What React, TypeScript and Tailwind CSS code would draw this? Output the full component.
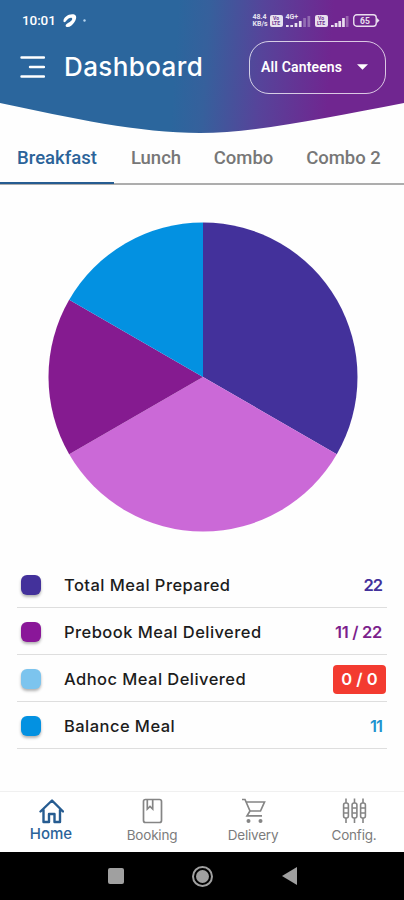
import { clsx } from 'clsx'

const tabs = [
  { label: 'Breakfast', width: 'w-[114px]' },
  { label: 'Lunch', width: 'w-[84px]' },
  { label: 'Combo', width: 'w-[91px]' },
  { label: 'Combo 2', width: 'w-[109px]' },
]

const slices = [
  { color: '#43319b', from: 0, to: 120 },
  { color: '#cb69d7', from: 120, to: 240 },
  { color: '#851b90', from: 240, to: 300 },
  { color: '#0391e1', from: 300, to: 360 },
]

const meals = [
  { label: 'Total Meal Prepared', value: '22', swatch: 'bg-[#43319b]', text: 'text-[#43319b] tracking-[-1px]' },
  { label: 'Prebook Meal Delivered', value: '11 / 22', swatch: 'bg-[#8a1799]', text: 'text-[#7d1f8c] tracking-[-0.3px]' },
  { label: 'Adhoc Meal Delivered', value: '0 / 0', swatch: 'bg-[#7cc4ee]', text: 'text-white', alert: true },
  { label: 'Balance Meal', value: '11', swatch: 'bg-[#0391e1]', text: 'text-[#1e93cf] tracking-[-1px]' },
]

const slicePath = (from: number, to: number) => {
  const point = (deg: number) => {
    const a = ((deg - 90) * Math.PI) / 180
    return `${155 + 154.5 * Math.cos(a)} ${155 + 154.5 * Math.sin(a)}`
  }
  return `M155 155L${point(from)}A154.5 154.5 0 0 1 ${point(to)}Z`
}

const SimBadge = ({ className }: { className?: string }) => (
  <div
    className={clsx(
      'flex h-[12px] w-[13px] flex-col items-center justify-center rounded-[2px] bg-white text-[5px] font-bold leading-[5px] text-[#6d3290]',
      className,
    )}
  >
    <span>Vo</span>
    <span>LTE</span>
  </div>
)

type SignalBarsProps = { bars: number[]; lit: number; step: number; className?: string }

const SignalBars = ({ bars, lit, step, className }: SignalBarsProps) => (
  <svg width={bars.length * step} height="12" className={className}>
    {bars.map((h, i) => (
      <rect key={i} x={i * step} y={12 - h} width="2.7" height={h} fill="#fff" opacity={i < lit ? 1 : 0.35} />
    ))}
  </svg>
)

const StatusBar = () => (
  <div className="flex h-[40px] items-center pl-[22px] pr-[24px] pt-[1px] font-[Roboto] text-white">
    <span className="w-[34px] whitespace-nowrap text-[13.5px] font-medium leading-none tracking-[-0.1px]">10:01</span>
    <svg width="24" height="16" viewBox="0 0 24 16" className="ml-[6px]">
      <path
        d="M1.500 8.500C1 4 7 .5 11.500 1.300C15.500 2.200 14.500 6.500 12 9.800C10.500 12 7.500 14.500 5 14C2.500 13.300 4 11 6 10C8.500 8.800 11 6.800 10 5.300C9 4 6 5.500 4.500 7.500C3.500 9 2 10 1.500 8.500Z"
        fill="#fff"
      />
      <circle cx="22.500" cy="7.500" r="1.200" fill="#b5d4ef" />
    </svg>
    <div className="ml-auto flex h-[14px] items-center opacity-85">
      <div className="w-[17px] text-[7px] font-bold leading-[7px]">
        <div>48.4</div>
        <div>KB/s</div>
      </div>
      <SimBadge />
      <div className="relative ml-[3px] h-[12px] w-[27px]">
        <SignalBars bars={[2, 2, 4, 6, 9, 11]} lit={4} step={4.3} />
        <span className="absolute -top-[1px] left-0 text-[7px] font-bold leading-[6px]">4G+</span>
      </div>
      <SimBadge className="ml-[2px]" />
      <SignalBars className="ml-[3px]" bars={[2, 4, 6, 9, 11]} lit={4} step={3.7} />
      <svg width="27" height="13" viewBox="0 0 27 13" className="ml-[4px]">
        <rect x=".75" y=".75" width="22.500" height="11.500" rx="3" fill="none" stroke="#fff" strokeWidth="1.400" />
        <path d="M24 4l2.500 2.500L24 9Z" fill="#fff" />
        <text x="12" y="9.500" textAnchor="middle" fontSize="8.500" fontWeight="700" fontFamily="Roboto, sans-serif" fill="#fff">
          65
        </text>
      </svg>
    </div>
  </div>
)

const Header = () => (
  <header className="relative h-[134px] shrink-0">
    <svg width="404" height="134" className="absolute inset-0">
      <defs>
        <linearGradient id="sky" gradientUnits="userSpaceOnUse" x1="175" y1="60" x2="330" y2="70">
          <stop offset="0" stopColor="#2b669d" />
          <stop offset=".2" stopColor="#36609c" />
          <stop offset=".55" stopColor="#56449a" />
          <stop offset="1" stopColor="#702690" />
        </linearGradient>
      </defs>
      <path d="M0 0H404V103C325 118 255 133 200 133C140 133 70 118 0 103Z" fill="url(#sky)" />
    </svg>
    <div className="relative">
      <StatusBar />
      <div className="flex h-[54px] items-center pl-[20px] pr-[18px] text-white">
        <svg width="25" height="24" stroke="#fff" strokeWidth="2.400" strokeLinecap="round">
          <path d="M1.500 2.500H24M10 12H24M1.500 21.500H24" />
        </svg>
        <h1 className="ml-[19px] whitespace-nowrap text-[26px] font-medium leading-none tracking-[0.4px]">Dashboard</h1>
        <button className="ml-auto flex h-[53px] w-[137px] items-center whitespace-nowrap rounded-[20px] border-[1.5px] border-white/75 pl-[11px] font-[Roboto] text-[14px] font-semibold tracking-[0.15px]">
          All Canteens
          <svg width="11" height="6" className="ml-[15px]">
            <path d="M0 .3H11L5.500 5.800Z" fill="#fff" />
          </svg>
        </button>
      </div>
    </div>
  </header>
)

const HomeIcon = () => (
  <svg width="26" height="26" viewBox="0 0 26 26" fill="none" stroke="#265c91" strokeWidth="2.400" strokeLinejoin="round" strokeLinecap="round">
    <path d="M2.500 13.500L14 2.500L25 13.500M5.500 11.500V24H11V16H16.500V24H22V11.500" />
  </svg>
)

const BookingIcon = () => (
  <svg width="26" height="26" viewBox="0 0 26 26" fill="none" stroke="#858585" strokeWidth="1.700">
    <rect x="4.500" y="1.500" width="18" height="23" rx="2" />
    <path d="M8.300 1.500V11L11 8.500L13.700 11V1.500" />
  </svg>
)

const DeliveryIcon = () => (
  <svg width="26" height="26" viewBox="0 0 26 26" fill="none" stroke="#858585" strokeWidth="1.700">
    <path d="M2 1.500H5L10 13H20.500L24.500 4H6.500M10 13L7 17.800H22" />
    <circle cx="8.500" cy="23" r="2" fill="#858585" stroke="none" />
    <circle cx="20.500" cy="23" r="2" fill="#858585" stroke="none" />
  </svg>
)

const ConfigIcon = () => (
  <svg width="26" height="26" viewBox="0 0 26 26" fill="none" stroke="#858585" strokeWidth="1.600">
    {[5, 13.5, 22].map((x) => (
      <g key={x}>
        <path d={`M${x} .5V5M${x} 20V25`} />
        <rect x={x - 2.4} y="5" width="4.800" height="15" rx="2" />
        <path d={`M${x - 2.4} 10H${x + 2.4}M${x - 2.4} 15H${x + 2.4}`} />
      </g>
    ))}
  </svg>
)

const navItems = [
  { label: 'Home', icon: HomeIcon, active: true },
  { label: 'Booking', icon: BookingIcon },
  { label: 'Delivery', icon: DeliveryIcon },
  { label: 'Config.', icon: ConfigIcon },
]

export default function App() {
  return (
    <div className="flex h-[900px] w-[404px] flex-col overflow-hidden bg-[#fefefe] font-[Inter]">
      <Header />

      <nav className="flex h-[51px] shrink-0 border-b-2 border-[#adadad]">
        {tabs.map((tab, i) => (
          <div
            key={tab.label}
            className={clsx(
              'flex h-[50px] shrink-0 items-center justify-center whitespace-nowrap pt-[2px] font-[Roboto] text-[18.5px] font-medium',
              tab.width,
              i === 0 ? 'border-b-[2.5px] border-[#265c91] text-[#2b6399]' : 'pb-[2px] text-[#777777]',
            )}
          >
            {tab.label}
          </div>
        ))}
      </nav>

      <div className="flex h-[376px] shrink-0 justify-center pl-[2px] pt-[37px]">
        <svg width="310" height="310" viewBox="0 0 310 310">
          {slices.map((slice) => (
            <path key={slice.from} d={slicePath(slice.from, slice.to)} fill={slice.color} />
          ))}
        </svg>
      </div>

      <ul className="mx-[17px] shrink-0">
        {meals.map((meal) => (
          <li
            key={meal.label}
            className="flex h-[46.9px] items-center border-b-[1.5px] border-[#dedede] pl-[4px] pr-[5px] pt-[3px]"
          >
            <span className={clsx('h-[20px] w-[20px] rounded-[6px] shadow-[0_2px_3px_rgba(0,0,0,0.3)]', meal.swatch)} />
            <span className="ml-[23px] whitespace-nowrap text-[16.5px] font-medium leading-none tracking-[0.45px] text-[#1c1c1c]">
              {meal.label}
            </span>
            <span
              className={clsx(
                'ml-auto flex items-center justify-center whitespace-nowrap text-[16.5px] font-semibold leading-none',
                meal.text,
                meal.alert && '-mr-[4px] h-[29px] w-[53px] rounded-[4px] bg-[#f33b30]',
              )}
            >
              {meal.value}
            </span>
          </li>
        ))}
      </ul>

      <footer className="mt-auto shrink-0">
        <div className="flex h-[61px] border-t border-[#f0f0f0] bg-white">
          {navItems.map((item) => (
            <div
              key={item.label}
              className={clsx(
                'flex flex-1 flex-col items-center pl-[1px] pt-[6px] leading-none',
                item.active
                  ? 'gap-[2px] text-[15px] font-medium text-[#2b6399]'
                  : 'gap-[5px] text-[13.5px] tracking-[-0.2px] text-[#7c7c7c]',
              )}
            >
              <item.icon />
              <span>{item.label}</span>
            </div>
          ))}
        </div>
        <div className="flex h-[48px] items-center bg-black">
          <div className="ml-[108px] h-[16px] w-[16px] rounded-[2px] bg-[#a0a0a0]" />
          <div className="ml-[68px] flex h-[21px] w-[21px] items-center justify-center rounded-full border-2 border-[#a0a0a0]">
            <div className="h-[13px] w-[13px] rounded-full bg-[#a0a0a0]" />
          </div>
          <svg width="15" height="18" className="ml-[69px]">
            <path d="M0 9L15 0V18Z" fill="#a0a0a0" />
          </svg>
        </div>
      </footer>
    </div>
  )
}
